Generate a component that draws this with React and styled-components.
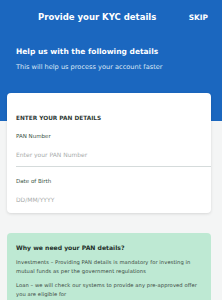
import React from 'react';
import styled, { createGlobalStyle } from 'styled-components';

const GlobalStyle = createGlobalStyle`
  * { box-sizing: border-box; }
  body {
    margin: 0;
    font-family: "DejaVu Sans", "Noto Sans", sans-serif;
    background: #f4f5f5;
  }
`;

export default function App() {
  return (
    <>
      <GlobalStyle />
      <Page>
        <Header>
          <TopBar>
            <Title>Provide your KYC details</Title>
            <Skip>SKIP</Skip>
          </TopBar>
          <Intro>
            <IntroTitle>Help us with the following details</IntroTitle>
            <IntroText>This will help us process your account faster</IntroText>
          </Intro>
        </Header>
        <Body>
          <Card>
            <CardTitle>ENTER YOUR PAN DETAILS</CardTitle>
            <Field>
              <Label>PAN Number</Label>
              <Input placeholder="Enter your PAN Number" />
            </Field>
            <Field>
              <Label>Date of Birth</Label>
              <Input placeholder="DD/MM/YYYY" />
            </Field>
          </Card>
          <InfoBox>
            <InfoTitle>Why we need your PAN details?</InfoTitle>
            <InfoText>
              Investments – Providing PAN details is mandatory for investing in
              mutual funds as per the government regulations
            </InfoText>
            <InfoText>
              Loan – we will check our systems to provide any pre-approved offer
              you are eligible for
            </InfoText>
          </InfoBox>
        </Body>
      </Page>
    </>
  );
}

const Page = styled.div`
  width: 222px;
  height: 300px;
  overflow: hidden;
  background: #f4f5f5;
`;

const Header = styled.div`
  background: #1b67bf;
  height: 121px;
  padding: 10px 14px 0 16px;
  color: #fff;
`;

const TopBar = styled.div`
  display: flex;
  align-items: center;
  justify-content: space-between;
  padding-left: 22px;
  height: 14px;
`;

const Title = styled.div`
  font-size: 8.5px;
  font-weight: bold;
`;

const Skip = styled.div`
  font-size: 7.4px;
  font-weight: bold;
`;

const Intro = styled.div`
  margin-top: 23px;
`;

const IntroTitle = styled.div`
  font-size: 7.5px;
  font-weight: bold;
`;

const IntroText = styled.div`
  margin-top: 7px;
  font-size: 6.6px;
  color: #dce8f6;
`;

const Body = styled.div`
  margin-top: -28px;
  padding: 0 11px 0 7px;
  display: flex;
  flex-direction: column;
  gap: 20px;
`;

const Card = styled.div`
  background: #fff;
  border-radius: 4px;
  box-shadow: 0 1px 3px rgba(0, 0, 0, 0.12);
  padding: 20px 0 2px 9px;
`;

const CardTitle = styled.div`
  font-size: 5.8px;
  line-height: 10px;
  font-weight: bold;
  color: #2f3a35;
  margin-bottom: 9px;
`;

const Field = styled.div`
  display: flex;
  flex-direction: column;
  & + & {
    border-top: 1px solid #d5dbdb;
    padding-top: 10px;
  }
`;

const Label = styled.div`
  font-size: 5.5px;
  line-height: 8px;
  color: #3a5547;
`;

const Input = styled.input`
  border: none;
  outline: none;
  background: transparent;
  padding: 0;
  margin: 10px 0 7px;
  height: 9px;
  line-height: 9px;
  font-family: inherit;
  font-size: 6px;
  color: #333;
  &::placeholder {
    color: #a9adac;
  }
`;

const InfoBox = styled.div`
  background: #bee9d3;
  border-radius: 4px;
  padding: 10px 4px 10px 9px;
`;

const InfoTitle = styled.div`
  font-size: 6.1px;
  line-height: 10px;
  font-weight: bold;
  color: #23302a;
  margin-bottom: 5px;
`;

const InfoText = styled.div`
  font-size: 5.2px;
  line-height: 9px;
  letter-spacing: 0.08px;
  color: #3a4741;
  margin-bottom: 5px;
`;
